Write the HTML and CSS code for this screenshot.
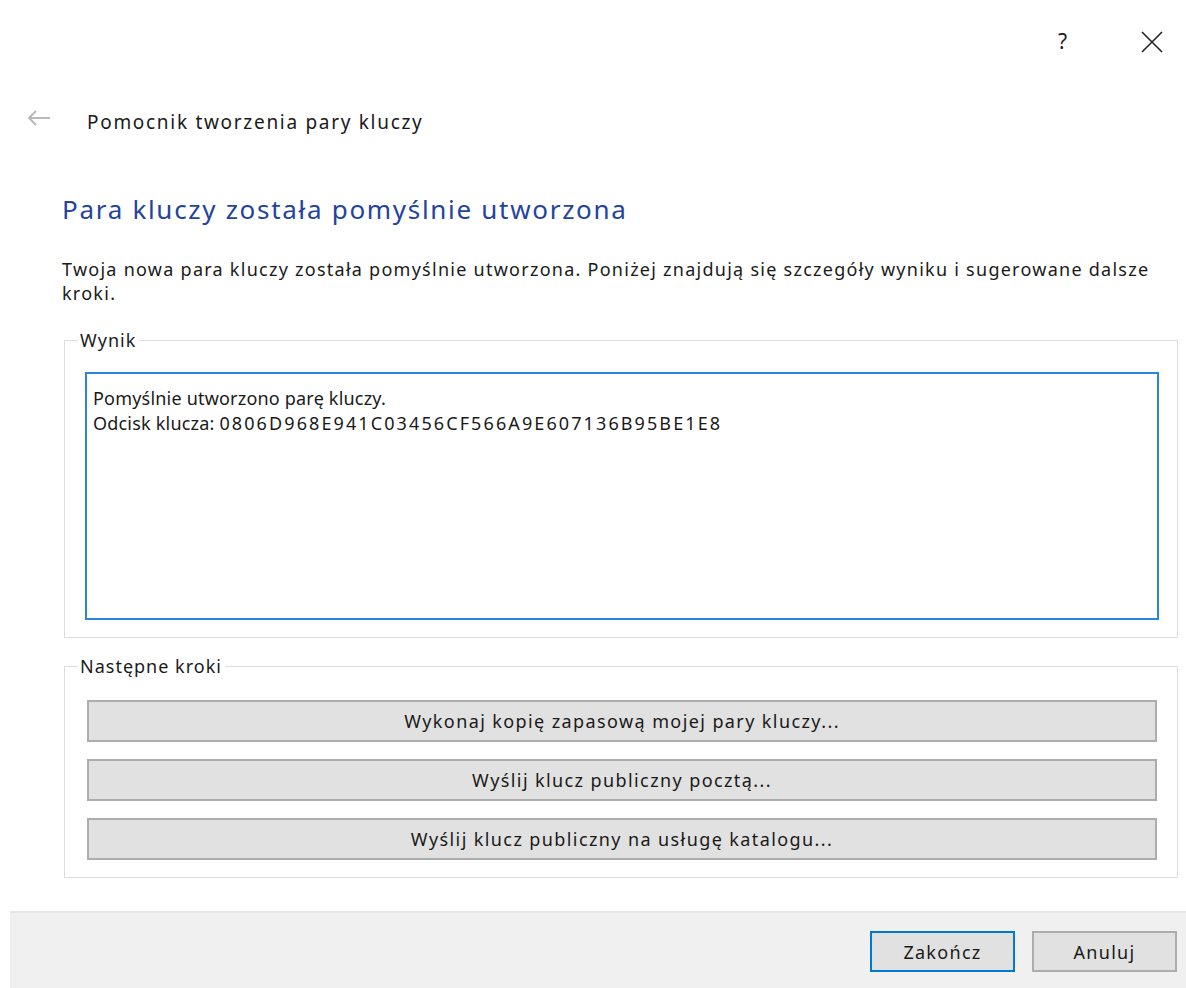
FILE: index.html
```html
<!DOCTYPE html>
<html lang="pl">
<head>
<meta charset="utf-8">
<title>Pomocnik tworzenia pary kluczy</title>
<link rel="stylesheet" href="styles.css">
</head>
<body>
<div class="dialog">
  <div class="titlebar">
    <span class="tb-help">?</span>
    <svg class="tb-close" width="22" height="22" viewBox="0 0 22 22"><path d="M1 1 L21 21 M21 1 L1 21" stroke="#222" stroke-width="1.6" fill="none"/></svg>
  </div>
  <div class="navbar">
    <svg class="back" width="24" height="16" viewBox="0 0 24 16"><path d="M23 8 H2 M9 1 L2 8 L9 15" stroke="#b9b9b9" stroke-width="2" fill="none"/></svg>
    <span class="nav-title">Pomocnik tworzenia pary kluczy</span>
  </div>
  <main class="content">
    <h1 class="heading">Para kluczy została pomyślnie utworzona</h1>
    <p class="intro">Twoja nowa para kluczy została pomyślnie utworzona. Poniżej znajdują się szczegóły wyniku i sugerowane dalsze kroki.</p>
    <fieldset class="group group-result">
      <legend>Wynik</legend>
      <div class="group-body">
        <div class="result-box">Pomyślnie utworzono parę kluczy.<br>Odcisk klucza: <span class="fingerprint">0806D968E941C03456CF566A9E607136B95BE1E8</span></div>
      </div>
    </fieldset>
    <fieldset class="group group-steps">
      <legend>Następne kroki</legend>
      <div class="group-body steps">
        <button class="step">Wykonaj kopię zapasową mojej pary kluczy...</button>
        <button class="step">Wyślij klucz publiczny pocztą...</button>
        <button class="step">Wyślij klucz publiczny na usługę katalogu...</button>
      </div>
    </fieldset>
  </main>
  <footer class="footer">
    <button class="fbtn fbtn-default">Zakończ</button>
    <button class="fbtn">Anuluj</button>
  </footer>
</div>
</body>
</html>
```

FILE: styles.css
```css
html, body {
  margin: 0;
  padding: 0;
  background: #ffffff;
}

body {
  font-family: "Noto Sans", "Open Sans", "DejaVu Sans", sans-serif;
  color: #1a1a1a;
  font-size: 18px;
}

.dialog {
  width: 1186px;
  height: 988px;
  display: flex;
  flex-direction: column;
  overflow: hidden;
}

/* window caption: help and close glyphs */
.titlebar {
  height: 86px;
  display: flex;
  justify-content: flex-end;
  align-items: flex-start;
  padding-top: 31px;
  padding-right: 23px;
  box-sizing: border-box;
  gap: 74px;
}

.tb-help {
  font-size: 21px;
  line-height: 22px;
  color: #222;
  margin-top: -1px;
}

.tb-close {
  display: block;
}

.navbar {
  height: 72px;
  display: flex;
  align-items: flex-start;
  padding-left: 27px;
  padding-top: 24px;
  box-sizing: border-box;
}

.back {
  display: block;
  margin-top: 0;
}

.nav-title {
  margin-left: 36px;
  font-size: 19px;
  letter-spacing: 1.7px;
  line-height: 24px;
  color: #1a1a1a;
}

.content {
  padding-left: 62px;
  padding-right: 8px;
  flex: 1;
}

.heading {
  margin: 34px 0 0 0;
  font-weight: normal;
  font-size: 26px;
  letter-spacing: 1.7px;
  line-height: 34px;
  color: #24439e;
}

.intro {
  margin: 31px 0 0 0;
  width: 1110px;
  font-size: 18px;
  letter-spacing: 1.26px;
  line-height: 24px;
}

/* group boxes */
.group {
  margin: 23px 0 0 2px;
  border: 1px solid #dedede;
  padding: 0;
  width: 1114px;
  box-sizing: border-box;
}

.group legend {
  margin-left: 13px;
  padding: 0 3px 0 2px;
  font-size: 18px;
  letter-spacing: 1px;
  line-height: 24px;
}

.group-result {
  height: 310px;
}

.group-result .group-body {
  padding: 20px 18px 0 20px;
}

.result-box {
  height: 248px;
  border: 2px solid #2b86dc;
  box-sizing: border-box;
  padding: 12px 6px;
  font-size: 18px;
  letter-spacing: 0.2px;
  line-height: 25px;
  color: #1a1a1a;
}

.fingerprint {
  letter-spacing: 2.1px;
}

.group-steps {
  margin-top: 16px;
  height: 224px;
}

.steps {
  padding: 22px 20px 0 22px;
  display: flex;
  flex-direction: column;
  gap: 17px;
}

.step {
  display: block;
  width: 100%;
  height: 42px;
  background: #e1e1e1;
  border: 2px solid #adadad;
  font-family: inherit;
  font-size: 18px;
  letter-spacing: 1.4px;
  color: #1a1a1a;
  padding: 0;
}

/* bottom command bar */
.footer {
  margin-left: 10px;
  height: 77px;
  background: #f0f0f0;
  border-top: 2px solid #e4e4e4;
  box-sizing: border-box;
  display: flex;
  justify-content: flex-end;
  align-items: flex-start;
  padding-top: 18px;
  padding-right: 9px;
  gap: 17px;
}

.fbtn {
  width: 145px;
  height: 41px;
  background: #e1e1e1;
  border: 2px solid #adadad;
  font-family: inherit;
  font-size: 18px;
  letter-spacing: 1.3px;
  color: #1a1a1a;
  padding: 0;
}

.fbtn-default {
  border-color: #0078d7;
}
```
